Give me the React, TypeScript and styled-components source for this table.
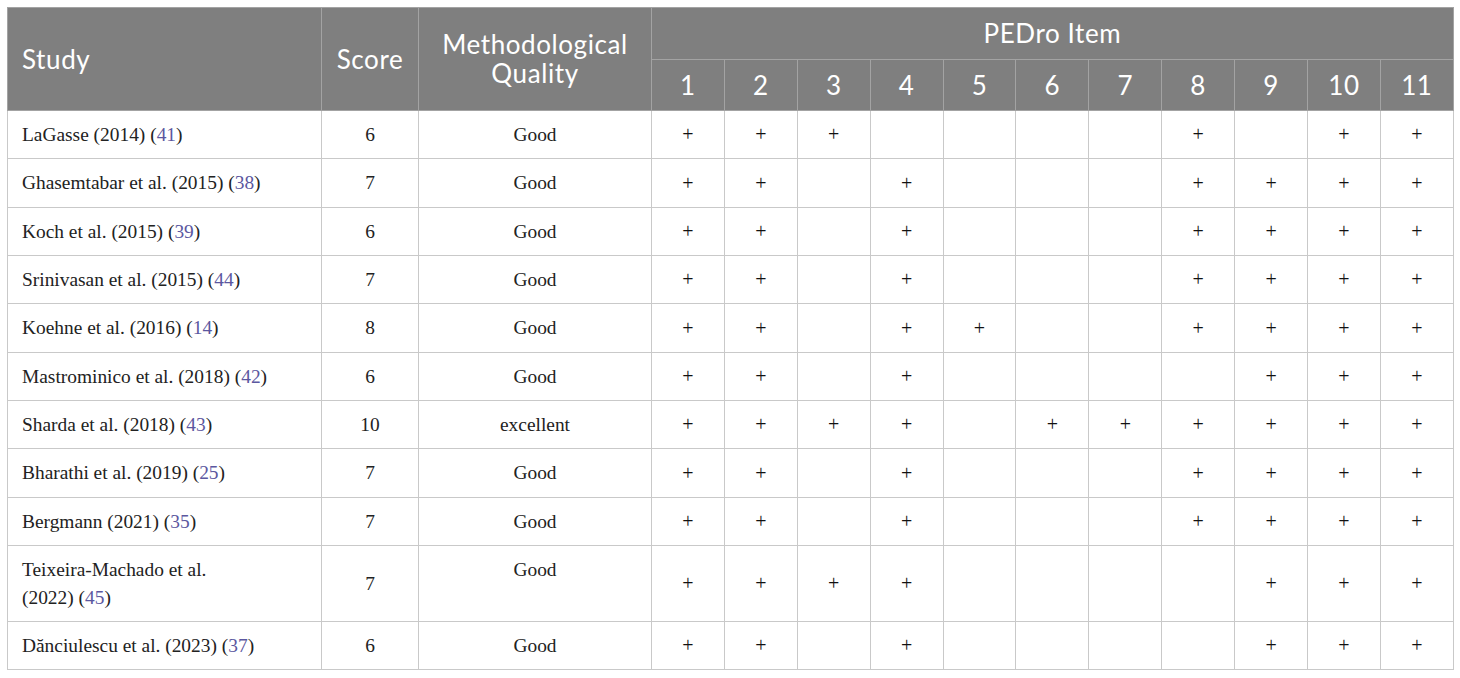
import React from "react";
import styled, { createGlobalStyle } from "styled-components";

const Global = createGlobalStyle`
  html, body { margin: 0; padding: 0; background: #ffffff; }
  body { font-family: "Liberation Serif", serif; }
`;

const Page = styled.div`
  padding: 7px 0 0 7px;
`;

const Table = styled.table`
  border-collapse: collapse;
  table-layout: fixed;
  width: 1446px;
  border: 1px solid #c9c9c9;
`;

const HeadCell = styled.th<{ $align?: "left" | "center" }>`
  background: #7f7f7f;
  color: #ffffff;
  font-family: Lato, "Open Sans", sans-serif;
  font-weight: 400;
  font-size: 26px;
  letter-spacing: 0.6px;
  line-height: 29px;
  text-align: ${(p) => p.$align ?? "center"};
  vertical-align: middle;
  padding: 0 14px;
  border: 1px solid #a3a3a3;
`;

const HeadRow = styled.tr<{ $h: number }>`
  height: ${(p) => p.$h}px;
`;

const BodyRow = styled.tr<{ $h: number }>`
  height: ${(p) => p.$h}px;
`;

const Cell = styled.td<{ $align?: "left" | "center"; $top?: boolean }>`
  border: 1px solid #c9c9c9;
  font-family: "Liberation Serif", "Times New Roman", serif;
  font-size: 19.4px;
  line-height: 28px;
  color: #222222;
  text-align: ${(p) => p.$align ?? "center"};
  vertical-align: ${(p) => (p.$top ? "top" : "middle")};
  padding: ${(p) => (p.$top ? "10px 14px 0" : "0 14px")};
`;

const Ref = styled.span`
  color: #5b57a0;
`;

const Plus = styled.span`
  font-size: 20px;
  color: #111111;
`;

type Row = {
  study: string[];
  ref: string;
  score: number;
  quality: string;
  items: number[];
  h: number;
};

const rows: Row[] = [
  { study: ["LaGasse (2014)"], ref: "41", score: 6, quality: "Good", items: [1, 2, 3, 8, 10, 11], h: 48 },
  { study: ["Ghasemtabar et al. (2015)"], ref: "38", score: 7, quality: "Good", items: [1, 2, 4, 8, 9, 10, 11], h: 49 },
  { study: ["Koch et al. (2015)"], ref: "39", score: 6, quality: "Good", items: [1, 2, 4, 8, 9, 10, 11], h: 48 },
  { study: ["Srinivasan et al. (2015)"], ref: "44", score: 7, quality: "Good", items: [1, 2, 4, 8, 9, 10, 11], h: 48 },
  { study: ["Koehne et al. (2016)"], ref: "14", score: 8, quality: "Good", items: [1, 2, 4, 5, 8, 9, 10, 11], h: 49 },
  { study: ["Mastrominico et al. (2018)"], ref: "42", score: 6, quality: "Good", items: [1, 2, 4, 9, 10, 11], h: 48 },
  { study: ["Sharda et al. (2018)"], ref: "43", score: 10, quality: "excellent", items: [1, 2, 3, 4, 6, 7, 8, 9, 10, 11], h: 48 },
  { study: ["Bharathi et al. (2019)"], ref: "25", score: 7, quality: "Good", items: [1, 2, 4, 8, 9, 10, 11], h: 49 },
  { study: ["Bergmann (2021)"], ref: "35", score: 7, quality: "Good", items: [1, 2, 4, 8, 9, 10, 11], h: 48 },
  { study: ["Teixeira-Machado et al.", "(2022)"], ref: "45", score: 7, quality: "Good", items: [1, 2, 3, 4, 9, 10, 11], h: 76 },
  { study: ["Dănciulescu et al. (2023)"], ref: "37", score: 6, quality: "Good", items: [1, 2, 4, 9, 10, 11], h: 48 },
];

const itemNums = Array.from({ length: 11 }, (_, i) => i + 1);

export default function App() {
  return (
    <Page>
      <Global />
      <Table>
        <colgroup>
          <col style={{ width: 314 }} />
          <col style={{ width: 97 }} />
          <col style={{ width: 233 }} />
          {itemNums.map((n) => (
            <col key={n} style={{ width: 72.9 }} />
          ))}
        </colgroup>
        <thead>
          <HeadRow $h={52}>
            <HeadCell rowSpan={2} $align="left">
              Study
            </HeadCell>
            <HeadCell rowSpan={2}>Score</HeadCell>
            <HeadCell rowSpan={2}>
              Methodological
              <br />
              Quality
            </HeadCell>
            <HeadCell colSpan={11}>PEDro Item</HeadCell>
          </HeadRow>
          <HeadRow $h={51}>
            {itemNums.map((n) => (
              <HeadCell key={n}>{n}</HeadCell>
            ))}
          </HeadRow>
        </thead>
        <tbody>
          {rows.map((r) => (
            <BodyRow key={r.study.join(" ")} $h={r.h}>
              <Cell $align="left" $top>
                {r.study.map((line, i) => (
                  <React.Fragment key={i}>
                    {i > 0 && <br />}
                    {line}
                  </React.Fragment>
                ))}{" "}
                (<Ref>{r.ref}</Ref>)
              </Cell>
              <Cell>{r.score}</Cell>
              <Cell $top>{r.quality}</Cell>
              {itemNums.map((n) => (
                <Cell key={n}>{r.items.includes(n) ? <Plus>+</Plus> : null}</Cell>
              ))}
            </BodyRow>
          ))}
        </tbody>
      </Table>
    </Page>
  );
}
